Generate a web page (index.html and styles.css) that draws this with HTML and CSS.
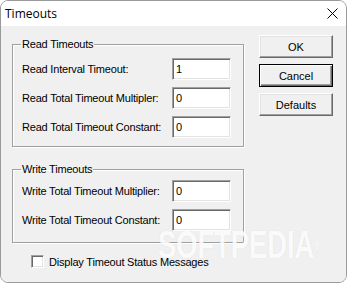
FILE: index.html
```html
<!DOCTYPE html>
<html lang="en">
  <head>
    <meta charset="UTF-8" />
    <title>Timeouts</title>
    <link rel="stylesheet" href="styles.css">
  </head>
  <body>
    <div class="window">
      <div class="titlebar">
        <span class="titlebar__text">Timeouts</span>
        <svg class="titlebar__close" width="11" height="11" viewBox="0 0 11 11">
          <path d="M0.5 0.5 L10.5 10.5 M10.5 0.5 L0.5 10.5" stroke="#000" stroke-width="1" fill="none" />
        </svg>
      </div>
      <div class="client">
        <div class="settings">
          <fieldset class="group group--read">
            <legend class="group__title">Read Timeouts</legend>
            <div class="row">
              <label class="row__label">Read Interval Timeout:</label>
              <input class="field" type="text" value="1" />
            </div>
            <div class="row">
              <label class="row__label">Read Total Timeout Multipler:</label>
              <input class="field" type="text" value="0" />
            </div>
            <div class="row">
              <label class="row__label">Read Total Timeout Constant:</label>
              <input class="field" type="text" value="0" />
            </div>
          </fieldset>

          <fieldset class="group group--write">
            <legend class="group__title">Write Timeouts</legend>
            <div class="row">
              <label class="row__label">Write Total Timeout Multiplier:</label>
              <input class="field" type="text" value="0" />
            </div>
            <div class="row">
              <label class="row__label">Write Total Timeout Constant:</label>
              <input class="field" type="text" value="0" />
            </div>
          </fieldset>

          <label class="check">
            <span class="check__box"></span>
            <span class="check__text">Display Timeout Status Messages</span>
          </label>
        </div>

        <div class="buttons">
          <button class="btn">OK</button>
          <button class="btn btn--default">Cancel</button>
          <button class="btn">Defaults</button>
        </div>

        <div class="watermark">SOFTPEDIA<sup>®</sup></div>
      </div>
    </div>
  </body>
</html>
```

FILE: styles.css
```css
* {
  margin: 0;
  padding: 0;
  box-sizing: border-box;
}

body {
  background-color: #fff;
  font-family: "Liberation Sans", Arial, sans-serif;
  font-size: 11px;
  letter-spacing: -0.2px;
  color: #000;
}

.window {
  width: 347px;
  height: 283px;
  border: 1px solid #9a9a9a;
  border-radius: 8px;
  overflow: hidden;

  display: flex;
  flex-direction: column;
}

.titlebar {
  height: 25px;
  background-color: #fff;
  padding: 0 8px 0 4px;

  display: flex;
  align-items: center;
  justify-content: space-between;
}

.titlebar__text {
  font-family: "Open Sans", "Noto Sans", sans-serif;
  font-size: 12px;
  letter-spacing: 0;
  margin-top: -1px;
}

.titlebar__close {
  display: block;
}

.client {
  position: relative;
  flex: 1;
  background-color: #f0f0f0;
  padding: 9px 0 0 11px;

  display: flex;
  gap: 15px;
}

.settings {
  width: 232px;
  margin-top: 3px;

  display: flex;
  flex-direction: column;
}

.group {
  border: 1px solid #a0a0a0;
  box-shadow: inset 1px 1px 0 #fff, 1px 1px 0 #fff;
  padding: 7px 12px 8px 8px;

  display: flex;
  flex-direction: column;
  gap: 7px;
}

.group--write {
  margin-top: 16px;
  padding-top: 4px;
  padding-bottom: 11px;
}

.group__title {
  padding: 0 1px;
  line-height: 13px;
}

.row {
  height: 22px;
  display: flex;
  align-items: center;
  justify-content: space-between;
}

.row__label {
  padding-left: 1px;
}

.field {
  width: 59px;
  height: 22px;
  background-color: #fff;
  border: 1px solid;
  border-color: #a0a0a0 #fff #fff #a0a0a0;
  box-shadow: inset 1px 1px 0 #696969, inset -1px -1px 0 #e3e3e3;
  padding: 0 3px;

  font-family: inherit;
  font-size: 11px;
  letter-spacing: 0;
  color: #000;
  outline: none;
}

.check {
  margin-top: 12px;
  padding-left: 19px;

  display: flex;
  align-items: center;
  gap: 5px;
}

.check__box {
  width: 13px;
  height: 13px;
  background-color: #fff;
  border: 1px solid;
  border-color: #a0a0a0 #fff #fff #a0a0a0;
  box-shadow: inset 1px 1px 0 #696969, inset -1px -1px 0 #e3e3e3;
}

.buttons {
  display: flex;
  flex-direction: column;
  gap: 6px;
}

.btn {
  width: 74px;
  height: 23px;
  background-color: #f0f0f0;
  border: 1px solid;
  border-color: #fff #696969 #696969 #fff;
  box-shadow: inset -1px -1px 0 #a0a0a0, inset 1px 1px 0 #e3e3e3;

  font-family: inherit;
  font-size: 11px;
  letter-spacing: 0;
  color: #000;
}

.btn--default {
  border-color: #000;
  box-shadow: inset 1px 1px 0 #fff, inset -1px -1px 0 #696969, inset -2px -2px 0 #a0a0a0;
}

/* watermark over the lower right of the dialog */
.watermark {
  position: absolute;
  left: 157px;
  top: 199px;
  transform: scaleX(0.7);
  transform-origin: left top;

  font-family: "Liberation Sans", Arial, sans-serif;
  font-weight: bold;
  font-size: 39px;
  line-height: 39px;
  letter-spacing: 0;
  white-space: nowrap;
  color: rgba(255, 255, 255, 0.85);
  text-shadow: 0 0 2px rgba(0, 0, 0, 0.07);
  pointer-events: none;
}

.watermark sup {
  font-size: 11px;
  vertical-align: top;
  position: relative;
  top: 1px;
}
```
